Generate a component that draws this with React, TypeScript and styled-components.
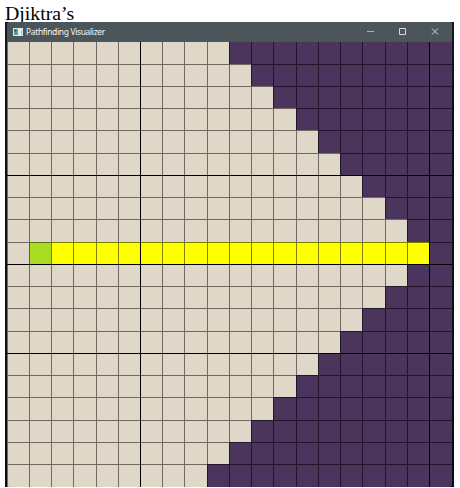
import React from "react";
import styled, { createGlobalStyle } from "styled-components";

const GlobalStyle = createGlobalStyle`
  body { margin: 0; background: #fff; overflow: hidden; }
`;

const Page = styled.main`
  width: 460px;
  height: 488px;
  display: flex;
  flex-direction: column;
  background: #fff;
`;

const Heading = styled.h1`
  margin: 0;
  height: 22px;
  padding-left: 5px;
  font: 400 19.8px/26px "Liberation Serif", "Times New Roman", serif;
  color: #000;
`;

const Window = styled.section`
  width: 449px;
  height: 465px;
  margin-left: 5px;
  box-sizing: border-box;
  padding: 0 2px;
  background: linear-gradient(#141b22, #0b0f16 25%, #0f1419 45%, #080c12);
`;

const TitleBar = styled.header`
  height: 20px;
  display: flex;
  align-items: center;
  background: #4b555a;
  border-radius: 2px 2px 0 0;
`;

const AppIcon = styled.svg`
  width: 10px;
  height: 8px;
  margin-left: 6px;
`;

const Title = styled.span`
  margin-left: 3px;
  flex: 1;
  font: 400 8.5px/20px "Noto Sans", "Open Sans", sans-serif;
  letter-spacing: -0.36px;
  color: #f4f5f5;
  white-space: nowrap;
`;

const Controls = styled.svg`
  width: 80px;
  height: 20px;
  margin-right: 5px;
`;

const tracks = (edges: number[]) =>
  edges.slice(1).map((edge, i) => `${edge - edges[i]}px`).join(" ");

const COLUMN_EDGES = [7, 29, 51, 73, 96, 118, 140, 162, 184, 207, 229, 251, 273, 296, 318, 340, 362, 385, 407, 429, 452];
const ROW_EDGES = [42, 64, 86, 108, 130, 153, 175, 197, 219, 242, 264, 286, 308, 331, 353, 375, 397, 420, 442, 464, 487];

const Board = styled.div`
  display: grid;
  width: 445px;
  height: 445px;
  overflow: hidden;
  border-radius: 0 0 2px 2px;
  grid-template-columns: ${tracks(COLUMN_EDGES)};
  grid-template-rows: ${tracks(ROW_EDGES)};
`;

type Kind = "visited" | "open" | "path" | "start";

const fills: Record<Kind, string> = {
  visited: "#dfd7c8",
  open: "#4b355d",
  path: "#ffff00",
  start: "#aadc22",
};

const lines: Record<Kind, string> = {
  visited: "#736864",
  open: "#21162b",
  path: "#808000",
  start: "#556e11",
};

const Cell = styled.div<{ $kind: Kind; $top: "none" | "thin" | "bold"; $boldLeft: boolean }>`
  box-sizing: border-box;
  background: ${(p) => fills[p.$kind]};
  box-shadow:
    inset ${(p) => (p.$boldLeft ? "1px 0 #000" : "0 0 transparent")},
    inset ${(p) => (p.$top === "bold" ? "0 1px #000" : "0 0 transparent")},
    inset 1px ${(p) => (p.$top === "none" ? 0 : 1)}px ${(p) => lines[p.$kind]};
`;

const VISITED_PER_ROW = [10, 11, 12, 13, 14, 15, 16, 17, 18, 1, 18, 17, 16, 15, 14, 13, 12, 11, 10, 9];
const PATH_ROW = 9;

function kindAt(row: number, column: number): Kind {
  if (row === PATH_ROW && column === 1) return "start";
  if (row === PATH_ROW && column > 1 && column < 19) return "path";
  return column < VISITED_PER_ROW[row] ? "visited" : "open";
}

function topLine(row: number): "none" | "thin" | "bold" {
  if (row === 0) return "none";
  return [6, 10, 14].includes(row) ? "bold" : "thin";
}

export default function App() {
  return (
    <Page>
      <GlobalStyle />
      <Heading>Djiktra’s</Heading>
      <Window>
        <TitleBar>
          <AppIcon viewBox="0 0 10 8" shapeRendering="crispEdges">
            <path fill="#dfe9e8" d="M0 0h10v8H0z" />
            <path fill="#55a08a" d="M1 1h4v6H1z" />
            <path fill="#3e7378" d="M1 1h2v3H1z" />
            <path fill="#e9f0f0" d="M5 1h4v6H5z" />
            <path fill="#a5bcbd" d="M8 2h1v5H8z" />
          </AppIcon>
          <Title>Pathfinding Visualizer</Title>
          <Controls viewBox="0 0 80 20" fill="none" stroke="#d4d8d9">
            <path d="M0 9.5h7" stroke="#abb1b4" />
            <path d="M32.5 6.5h6v6h-6z" />
            <path d="M65 6.5l6 6m0-6l-6 6" />
          </Controls>
        </TitleBar>
        <Board>
          {VISITED_PER_ROW.map((_, row) =>
            Array.from({ length: 20 }, (__, column) => (
              <Cell
                key={`${row}-${column}`}
                $kind={kindAt(row, column)}
                $top={topLine(row)}
                $boldLeft={column === 6 || column === 19}
              />
            )),
          )}
        </Board>
      </Window>
    </Page>
  );
}
